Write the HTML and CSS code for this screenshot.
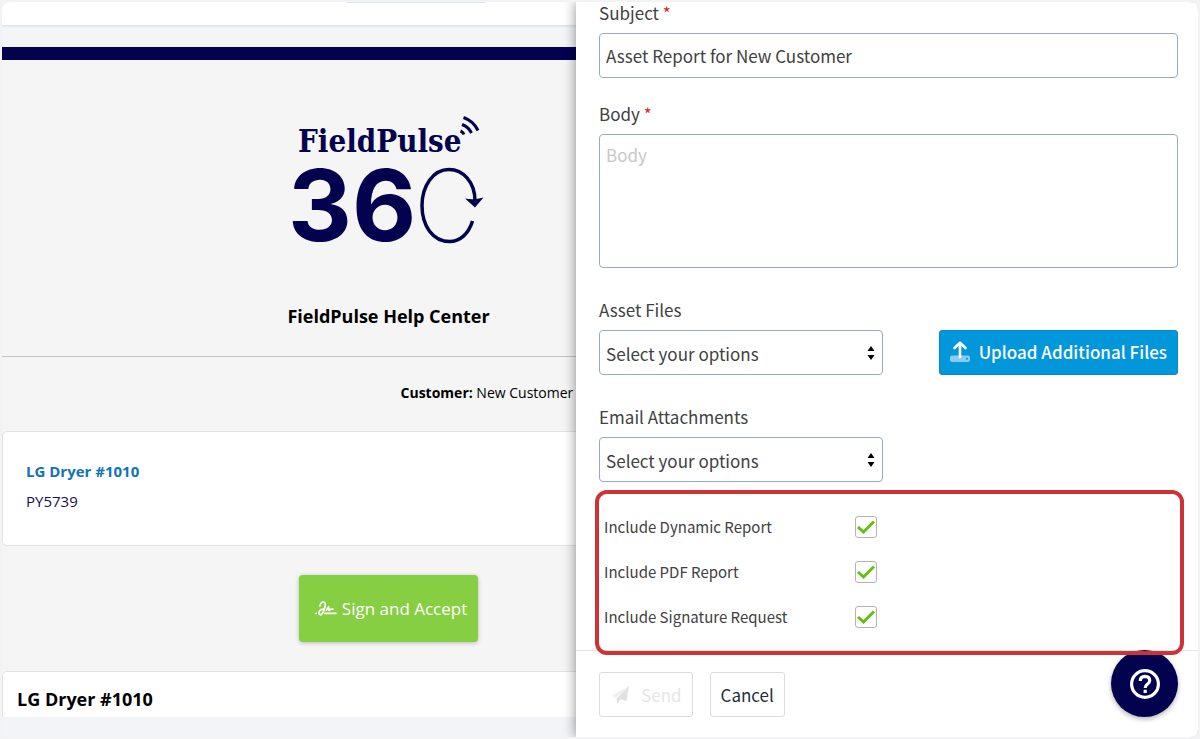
FILE: index.html
```html
<!DOCTYPE html>
<html lang="en">
<head>
<meta charset="utf-8">
<meta name="viewport" content="width=device-width, initial-scale=1">
<title>FieldPulse – Asset Report</title>
<link rel="stylesheet" href="styles.css">
</head>
<body>
<div class="app">
  <main class="report">
    <div class="topbar"><span class="topbar-tab"></span></div>
    <div class="band"></div>
    <header class="brand">
      <svg class="logo" viewBox="1 0 200 134" role="img" aria-label="FieldPulse 360">
        <text class="logo-name" x="10" y="41">FieldPulse</text>
        <text class="logo-number" x="0" y="130">36</text>
        <g fill="none" stroke="#02024f">
          <path stroke-width="3" d="M175.500 6.500Q185.500 10 190 19.500"/>
          <path stroke-width="3" d="M174 13.500Q180.500 16 183.500 22"/>
          <path stroke-width="3" d="M172.500 20Q175 21 176 23.500"/>
          <path stroke-width="3.500" d="M187 90C187 71 175 58.500 161 58.500C145 58.500 134 75 134 94.500C134 115 145 130.500 161.500 130.500C172 130.500 180.500 123 184.500 110"/>
        </g>
        <path fill="#02024f" d="M177 87.500Q186 89.500 195.500 86.500L187 96.500z"/>
      </svg>
      <h1 class="company">FieldPulse Help Center</h1>
    </header>
    <div class="customer-row">
      <p class="customer"><b>Customer:</b> New Customer</p>
    </div>
    <section class="card asset">
      <a class="asset-link" href="#">LG Dryer #1010</a>
      <p class="asset-code">PY5739</p>
    </section>
    <div class="sign-row">
      <button class="sign" type="button">
        <svg width="22" height="18" viewBox="0 0 22 18" fill="none" stroke="#fff" stroke-width="1.700" stroke-linecap="round" stroke-linejoin="round" aria-hidden="true">
          <path d="M1 13.300h.3M5 6Q5.500 2 8.500 2Q11.500 2.500 9.500 8.500Q7.500 14.800 5.500 14.800Q3.500 14.500 4 12Q5.500 8.500 9.500 9.200M11.500 10.300L13.500 6.800L13.800 10.300Q15.500 9 18 9.200M9.800 13.300H21"/>
        </svg>
        Sign and Accept
      </button>
    </div>
    <section class="card detail"><h2 class="detail-title">LG Dryer #1010</h2></section>
    <div class="report-end"></div>
  </main>

  <form class="panel">
    <div class="fields">
      <label class="label" for="subject">Subject <span class="required">*</span></label>
      <input class="control" id="subject" type="text" value="Asset Report for New Customer">

      <label class="label label-body" for="body">Body <span class="required">*</span></label>
      <textarea class="control control-area" id="body" placeholder="Body"></textarea>

      <div class="file-row">
        <div class="field">
          <label class="label" for="files">Asset Files</label>
          <div class="select">
            <select class="control" id="files"><option>Select your options</option></select>
            <svg class="arrows" width="8" height="14" viewBox="0 0 8 14" aria-hidden="true"><path d="M4 0l3.500 5h-7zM4 14l3.500-5h-7z"/></svg>
          </div>
        </div>
        <button class="upload" type="button">
          <svg width="20" height="22" viewBox="0 0 20 22" aria-hidden="true">
            <rect y="14.500" width="20" height="6.500" rx="2" fill="#8ccbf0"/>
            <circle cx="17" cy="17.700" r="1" fill="#0296db"/>
            <path d="M10 16V2.500M4.500 7L10 1.800L15.500 7" fill="none" stroke="#fff" stroke-width="2.600" stroke-linecap="round" stroke-linejoin="round"/>
          </svg>
          Upload Additional Files
        </button>
      </div>

      <div class="field field-attachments">
        <label class="label" for="attachments">Email Attachments</label>
        <div class="select">
          <select class="control" id="attachments"><option>Select your options</option></select>
          <svg class="arrows" width="8" height="14" viewBox="0 0 8 14" aria-hidden="true"><path d="M4 0l3.500 5h-7zM4 14l3.500-5h-7z"/></svg>
        </div>
      </div>

      <div class="options">
        <div class="option">
          <label for="dynamic">Include Dynamic Report</label>
          <span class="check"><input id="dynamic" type="checkbox" checked><svg viewBox="0 0 22 22" aria-hidden="true"><path d="M3 11L8.500 16L19 5.500"/></svg></span>
        </div>
        <div class="option">
          <label for="pdf">Include PDF Report</label>
          <span class="check"><input id="pdf" type="checkbox" checked><svg viewBox="0 0 22 22" aria-hidden="true"><path d="M3 11L8.500 16L19 5.500"/></svg></span>
        </div>
        <div class="option">
          <label for="signature">Include Signature Request</label>
          <span class="check"><input id="signature" type="checkbox" checked><svg viewBox="0 0 22 22" aria-hidden="true"><path d="M3 11L8.500 16L19 5.500"/></svg></span>
        </div>
      </div>
    </div>
    <footer class="actions">
      <button class="button" type="submit" disabled>
        <svg width="20" height="20" viewBox="0 0 20 20" aria-hidden="true"><path fill="#f0f0f0" d="M19 1L1 11l4.500 2L15 5z"/><path fill="#e2e2e2" d="M6.500 13.500L19 1l-2.500 15.500l-5.500-2.200L7 19z"/></svg>
        Send
      </button>
      <button class="button" type="button">Cancel</button>
    </footer>
  </form>

  <button class="help" type="button" aria-label="Help">
    <svg width="32" height="32" viewBox="0 0 32 32" fill="none" stroke="#fff" stroke-width="3.200" aria-hidden="true">
      <circle cx="16" cy="16" r="13.400"/>
      <path d="M11.300 13Q11.300 8.300 16 8.300Q20.700 8.500 20.700 12.500Q20.700 14.500 18.300 16.200Q16.200 17.800 16.200 20M16.200 21.800V25"/>
    </svg>
  </button>
</div>
</body>
</html>
```
FILE: styles.css
```css
* { box-sizing: border-box; }

body {
  margin: 0;
  background: #f3f3f6;
  color: #414141;
  font-family: "Open Sans", "Noto Sans", sans-serif;
}

h1, h2, p { margin: 0; }

button, input, select, textarea { font: inherit; color: inherit; }

button { cursor: pointer; }

.app {
  position: relative;
  display: grid;
  grid-template-columns: 48% 199px 1fr;
  min-height: calc(100vh - 4px);
  margin: 2px;
  border-radius: 8px;
  overflow: hidden;
}

/* The report runs on beneath the drawer. */
.report {
  grid-column: 1 / 3;
  grid-row: 1;
  display: flex;
  flex-direction: column;
  background: #f5f5f5;
  color: #000;
}

.topbar {
  height: 45px;
  background: linear-gradient(#fff 23px, #dfe1e3 23px, #f3f5f7 26px);
}

.topbar-tab {
  display: block;
  width: 138px;
  height: 1px;
  margin-left: 345px;
  background: #dce6fb;
}

.band {
  height: 13px;
  background: #02024f;
}

.brand {
  display: flex;
  flex-direction: column;
  align-items: center;
  padding: 51px 0 28px;
  border-bottom: 1px solid #c4c4c4;
}

.logo {
  width: 200px;
  height: 134px;
  overflow: visible;
}

.logo text { fill: #02024f; font-weight: 700; }

.logo-name {
  font-family: "DejaVu Serif Condensed", "DejaVu Serif", serif;
  font-size: 31px;
}

.logo-number {
  font-family: Inter, sans-serif;
  font-size: 99px;
}

.company {
  margin-top: 59px;
  font-size: 18px;
  line-height: 24px;
}

.customer-row {
  display: grid;
  grid-template-columns: 1fr 1fr;
  padding: 26px 0 28px;
}

.customer {
  grid-column: 2;
  padding-left: 12px;
  font-size: 14px;
  line-height: 20px;
}

.card {
  border: 1px solid #e3e3e3;
  border-radius: 5px;
  background: #fff;
}

.asset { padding: 24px 23px 29px; }

.asset-link {
  display: block;
  color: #1273b8;
  font-size: 15px;
  font-weight: 700;
  line-height: 30px;
  text-decoration: none;
}

.asset-code {
  color: #15104f;
  font-size: 15px;
  line-height: 30px;
}

.sign-row {
  display: flex;
  justify-content: center;
  padding: 29px 0;
}

.sign {
  display: flex;
  align-items: center;
  gap: 5px;
  height: 67px;
  padding: 0 11px 0 16px;
  border: 0;
  border-radius: 4px;
  background: #86ce42;
  box-shadow: 0 1px 4px rgb(0 0 0 / 25%);
  color: #fff;
  font-size: 17px;
}

.detail {
  padding: 15px 14px 6px;
  border-bottom: 0;
  border-radius: 5px 5px 0 0;
}

.detail-title {
  font-size: 18px;
  line-height: 24px;
}

.report-end {
  flex: 1;
  min-height: 20px;
  background: #f3f4f7;
}

.panel {
  grid-column: 2 / 4;
  grid-row: 1;
  position: relative;
  display: flex;
  flex-direction: column;
  background: #fff;
  box-shadow: 0 0 12px rgb(0 0 0 / 45%);
  font-family: "Noto Sans CJK SC", sans-serif;
  font-size: 17px;
}

.fields { padding: 0 20px 11px 23px; }

.label {
  display: block;
  margin-bottom: 9px;
  line-height: 22px;
}

.label-body { margin-top: 25px; }

.required { color: #d22b2b; }

.control {
  display: block;
  width: 100%;
  height: 45px;
  padding: 0 6px;
  border: 1px solid #9aa9c2;
  border-radius: 4px;
  background: #fff;
  line-height: 24px;
}

.control-area {
  height: 134px;
  padding-top: 8px;
  resize: none;
}

.control-area::placeholder { color: #c8c8c8; }

.file-row {
  display: flex;
  align-items: flex-end;
  justify-content: space-between;
  margin-top: 31px;
}

.field { width: 49%; }

.field-attachments { margin-top: 31px; }

.select { position: relative; }

.select select { appearance: none; padding-top: 2px; }

.arrows {
  position: absolute;
  top: 16px;
  right: 8px;
  pointer-events: none;
}

.upload {
  display: flex;
  align-items: center;
  gap: 9px;
  height: 45px;
  padding: 0 10px 2px;
  border: 1px solid #0788c7;
  border-radius: 3px;
  background: #0296db;
  color: #fff;
  font-weight: 500;
}

.options {
  position: relative;
  margin-top: 22px;
  padding-left: 5px;
  font-size: 15px;
}

/* Highlight frame over the option rows and the footer rule. */
.options::after {
  content: "";
  position: absolute;
  z-index: 3;
  inset: -14px -6px -16px -4px;
  border: 4px solid #cf3236;
  border-radius: 12px;
  pointer-events: none;
}

.option {
  display: grid;
  grid-template-columns: 251px auto;
  align-items: center;
  justify-content: start;
  height: 45px;
}

.check {
  position: relative;
  width: 22px;
  height: 22px;
}

.check input {
  display: block;
  appearance: none;
  width: 22px;
  height: 22px;
  margin: 0;
  border: 1px solid #b3b3b3;
  border-radius: 3px;
  background: #fff;
}

.check svg {
  position: absolute;
  inset: 0;
  fill: none;
  stroke: #66bf10;
  stroke-width: 3px;
  pointer-events: none;
}

.check input:not(:checked) + svg { display: none; }

.actions {
  display: flex;
  flex: 1;
  align-items: flex-start;
  gap: 17px;
  padding: 21px 23px 20px;
  border-top: 1px solid #e4e4e4;
}

.button {
  display: flex;
  align-items: center;
  gap: 11px;
  height: 45px;
  padding: 0 10px;
  border: 1px solid #dcdcdc;
  border-radius: 3px;
  background: #fff;
  color: #22303a;
}

.button:disabled { color: #e6e6e6; cursor: default; }

.help {
  position: absolute;
  z-index: 2;
  right: 20px;
  bottom: 20px;
  display: grid;
  place-items: center;
  width: 67px;
  height: 67px;
  padding: 0;
  border: 0;
  border-radius: 50%;
  background: #02024f;
  box-shadow: 0 2px 5px rgb(0 0 0 / 30%);
}
```
